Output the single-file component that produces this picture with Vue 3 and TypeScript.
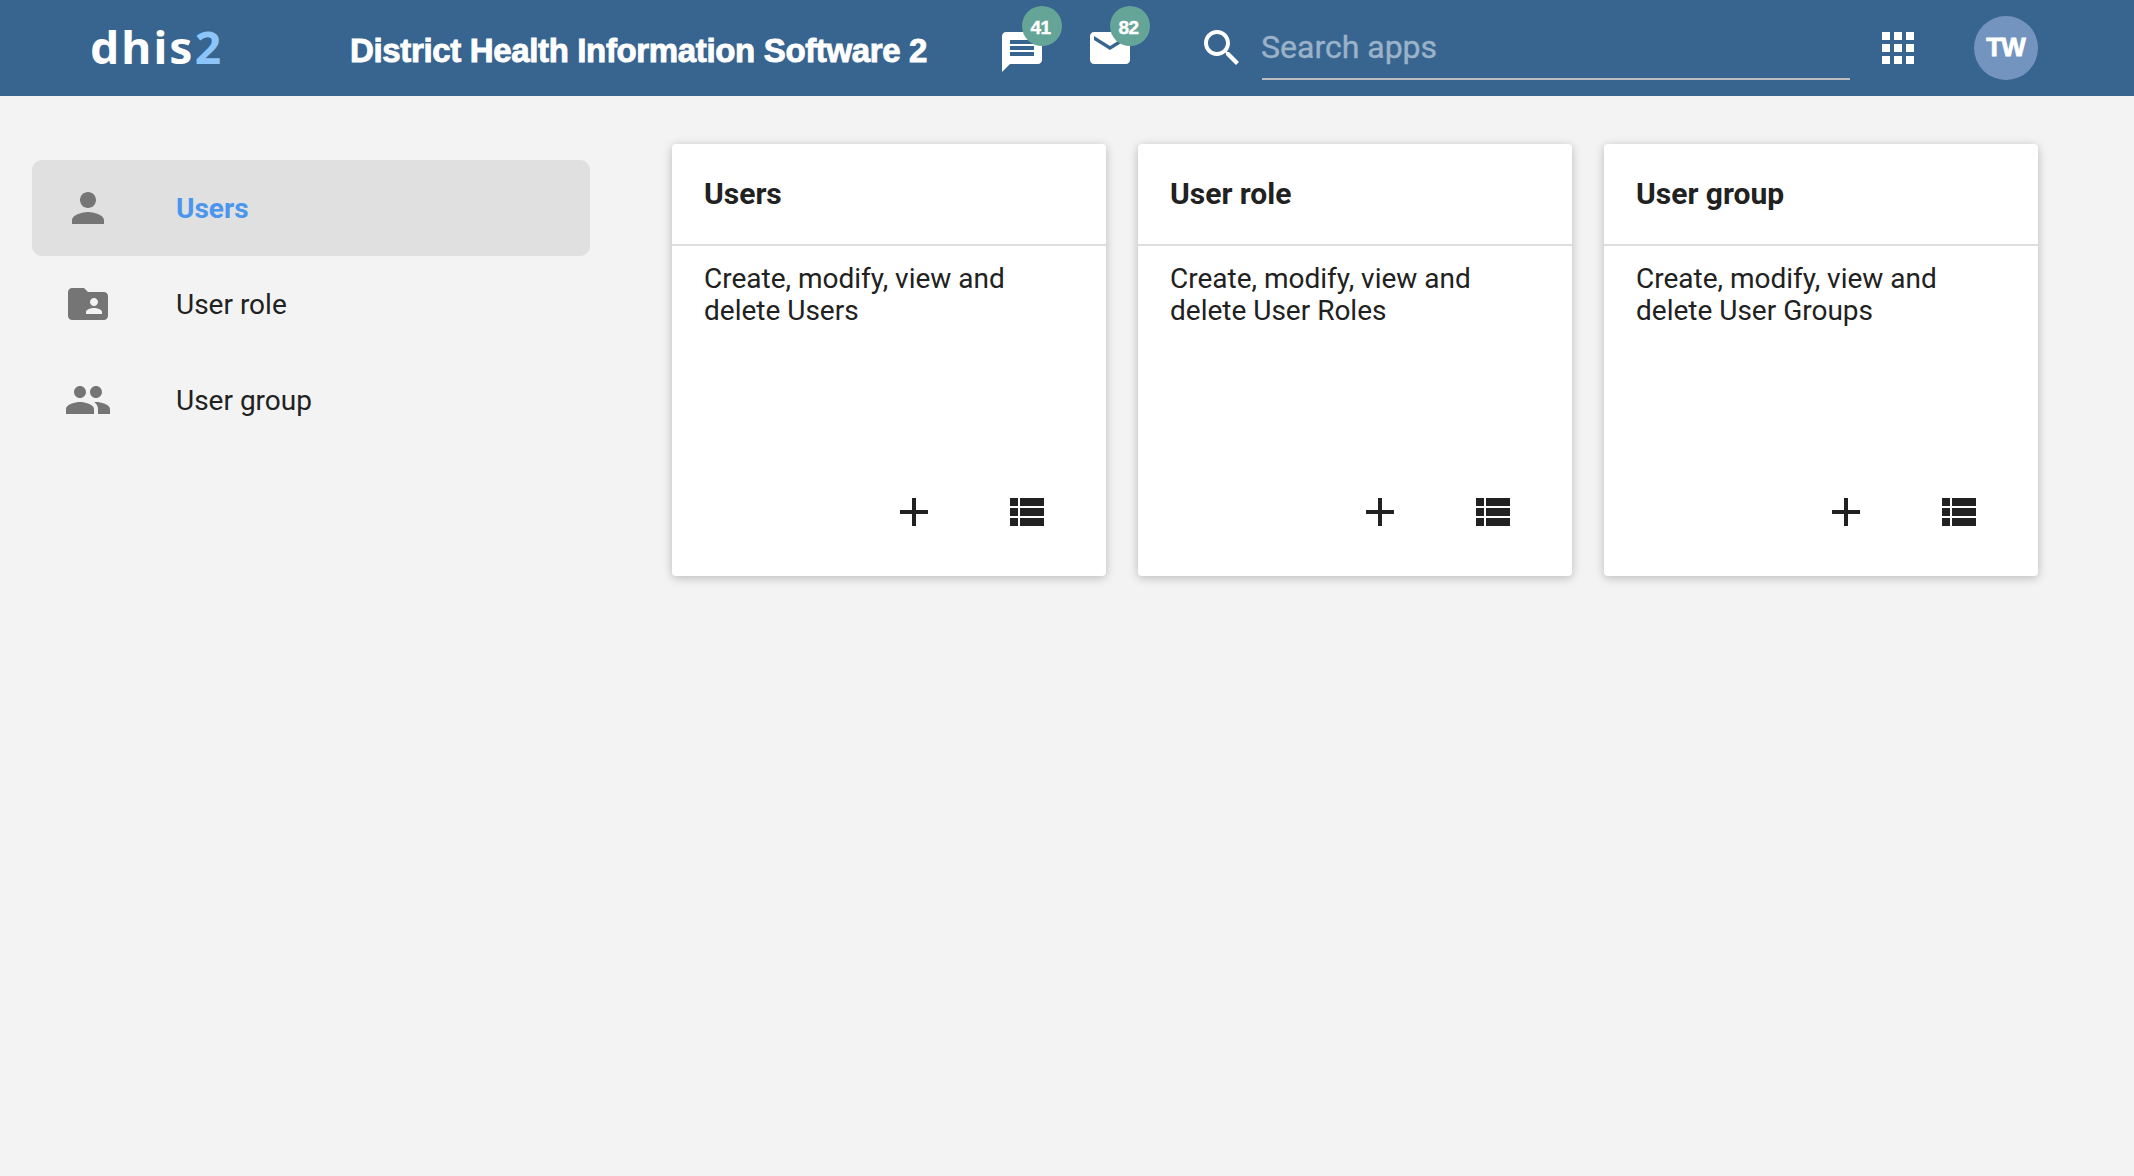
<script setup lang="ts">
interface MenuItem {
  label: string
  icon: string
  active?: boolean
}

interface SectionCard {
  title: string
  text: string
}

const icons = {
  chat: 'M20 2H4c-1.1 0-1.99.9-1.99 2L2 22l4-4h14c1.1 0 2-.9 2-2V4c0-1.1-.9-2-2-2zM6 9h12v2H6V9zm12 5H6v-2h12v2zm0-6H6V6h12v2z',
  mail: 'M20 4H4c-1.1 0-1.99.9-1.99 2L2 18c0 1.1.9 2 2 2h16c1.1 0 2-.9 2-2V6c0-1.1-.9-2-2-2zm0 4l-8 5-8-5V6l8 5 8-5v2z',
  search: 'M15.5 14h-.79l-.28-.27C15.41 12.59 16 11.11 16 9.5 16 5.91 13.09 3 9.5 3S3 5.91 3 9.5 5.91 16 9.5 16c1.61 0 3.09-.59 4.23-1.57l.27.28v.79l5 4.99L20.49 19l-4.99-5zm-6 0C7.01 14 5 11.99 5 9.5S7.01 5 9.5 5 14 7.01 14 9.5 11.99 14 9.5 14z',
  apps: 'M4 8h4V4H4v4zm6 12h4v-4h-4v4zm-6 0h4v-4H4v4zm0-6h4v-4H4v4zm6 0h4v-4h-4v4zm6-10v4h4V4h-4zm-6 4h4V4h-4v4zm6 6h4v-4h-4v4zm0 6h4v-4h-4v4z',
  person: 'M12 12c2.21 0 4-1.79 4-4s-1.79-4-4-4-4 1.79-4 4 1.79 4 4 4zm0 2c-2.67 0-8 1.34-8 4v2h16v-2c0-2.66-5.33-4-8-4z',
  folder: 'M20 6h-8l-2-2H4c-1.1 0-1.99.9-1.99 2L2 18c0 1.1.9 2 2 2h16c1.1 0 2-.9 2-2V8c0-1.1-.9-2-2-2zm-5 3c1.1 0 2 .9 2 2s-.9 2-2 2-2-.9-2-2 .9-2 2-2zm4 8h-8v-1c0-1.33 2.67-2 4-2s4 .67 4 2v1z',
  group: 'M16 11c1.66 0 2.99-1.34 2.99-3S17.66 5 16 5c-1.66 0-3 1.34-3 3s1.34 3 3 3zm-8 0c1.66 0 2.99-1.34 2.99-3S9.66 5 8 5C6.34 5 5 6.34 5 8s1.34 3 3 3zm0 2c-2.33 0-7 1.17-7 3.5V19h14v-2.5c0-2.33-4.67-3.5-7-3.5zm8 0c-.29 0-.62.02-.97.05 1.16.84 1.97 1.97 1.97 3.45V19h6v-2.5c0-2.33-4.67-3.5-7-3.5z',
  add: 'M19 13h-6v6h-2v-6H5v-2h6V5h2v6h6v2z',
  list: 'M4 14h4v-4H4v4zm0 5h4v-4H4v4zM4 9h4V5H4v4zm5 5h12v-4H9v4zm0 5h12v-4H9v4zM9 5v4h12V5H9z',
}

const menu: MenuItem[] = [
  { label: 'Users', icon: icons.person, active: true },
  { label: 'User role', icon: icons.folder },
  { label: 'User group', icon: icons.group },
]

const cards: SectionCard[] = [
  { title: 'Users', text: 'Create, modify, view and delete Users' },
  { title: 'User role', text: 'Create, modify, view and delete User Roles' },
  { title: 'User group', text: 'Create, modify, view and delete User Groups' },
]
</script>

<template>
  <div class="page">
    <header class="header">
      <div class="logo">dhis<span class="logo-two">2</span></div>
      <div class="title">District Health Information Software 2</div>
      <div class="notice chat">
        <svg class="icon" viewBox="0 0 24 24"><path :d="icons.chat" /></svg>
        <span class="badge">41</span>
      </div>
      <div class="notice mail">
        <svg class="icon" viewBox="0 0 24 24"><path :d="icons.mail" /></svg>
        <span class="badge">82</span>
      </div>
      <svg class="icon search-icon" viewBox="0 0 24 24"><path :d="icons.search" /></svg>
      <input class="search" type="text" placeholder="Search apps" />
      <svg class="icon apps" viewBox="0 0 24 24"><path :d="icons.apps" /></svg>
      <div class="avatar">TW</div>
    </header>

    <div class="body">
      <nav class="sidebar">
        <div v-for="item in menu" :key="item.label" class="item" :class="{ active: item.active }">
          <svg class="icon" viewBox="0 0 24 24"><path :d="item.icon" /></svg>
          <span>{{ item.label }}</span>
        </div>
      </nav>
      <main class="cards">
        <section v-for="card in cards" :key="card.title" class="card">
          <h2 class="card-title">{{ card.title }}</h2>
          <p class="card-text">{{ card.text }}</p>
          <div class="actions">
            <svg class="icon" viewBox="0 0 24 24"><path :d="icons.add" /></svg>
            <svg class="icon" viewBox="0 0 24 24"><path :d="icons.list" /></svg>
          </div>
        </section>
      </main>
    </div>
  </div>
</template>

<style>
body {
  margin: 0;
  background: #f3f3f3;
}
</style>

<style scoped>
.page {
  box-sizing: border-box;
  min-height: 1176px;
  background: #f3f3f3;
  font-family: Roboto, sans-serif;
  color: #212121;
}
.icon {
  display: block;
  flex: none;
  width: 48px;
  height: 48px;
  fill: currentColor;
}
.header {
  display: flex;
  align-items: center;
  box-sizing: border-box;
  height: 96px;
  padding-left: 90px;
  background: #376590;
  color: #fff;
}
.logo {
  width: 260px;
  margin-top: -2px;
  font: 700 44px/60px "Noto Sans", "Open Sans", sans-serif;
  letter-spacing: 2px;
  white-space: nowrap;
  transform: scaleX(1.05);
  transform-origin: left;
}
.logo-two {
  color: #8bc5f9;
}
.title {
  width: 648px;
  padding-top: 5px;
  font: bold 33px/40px "Liberation Sans", Arial, sans-serif;
  letter-spacing: -0.35px;
  white-space: nowrap;
  -webkit-text-stroke: 0.9px #fff;
}
.notice {
  position: relative;
  width: 48px;
}
.chat {
  margin-top: 8px;
}
.mail {
  margin-left: 40px;
}
.badge {
  position: absolute;
  top: -18px;
  left: 24px;
  box-sizing: border-box;
  width: 40px;
  height: 40px;
  padding-right: 3px;
  border-radius: 50%;
  background: #65a598;
  font: bold 19px/43px "Liberation Sans", Arial, sans-serif;
  letter-spacing: -0.6px;
  text-align: center;
  -webkit-text-stroke: 0.4px #fff;
}
.chat .badge {
  top: -22px;
}
.search-icon {
  margin-left: 64px;
}
.search {
  box-sizing: border-box;
  width: 588px;
  height: 64px;
  margin-left: 16px;
  padding: 0;
  border: 0;
  border-bottom: 2px solid #bdbdbd;
  outline: 0;
  background: transparent;
  color: #fff;
  font: 32px Roboto, sans-serif;
  text-indent: -1px;
}
.search::placeholder {
  color: #9bb2c8;
  opacity: 1;
  -webkit-text-stroke: 0.4px #9bb2c8;
}
.apps {
  margin-left: 24px;
}
.avatar {
  box-sizing: border-box;
  width: 64px;
  height: 64px;
  margin-left: 52px;
  padding-right: 1px;
  border-radius: 50%;
  background: #7494c0;
  font: bold 26px/62px "Liberation Sans", Arial, sans-serif;
  letter-spacing: -1px;
  text-align: center;
  -webkit-text-stroke: 0.8px #fff;
}
.body {
  display: flex;
  gap: 82px;
  padding: 48px 0 0 32px;
}
.sidebar {
  width: 558px;
  padding-top: 16px;
}
.item {
  display: flex;
  align-items: center;
  gap: 64px;
  height: 96px;
  padding-left: 32px;
  border-radius: 10px;
  font-size: 28px;
}
.item .icon {
  color: #757575;
}
.active {
  background: #e0e0e0;
  color: #4a96ee;
  font-weight: 700;
}
.cards {
  display: flex;
  gap: 32px;
}
.card {
  display: flex;
  flex-direction: column;
  box-sizing: border-box;
  width: 434px;
  height: 432px;
  border-radius: 4px;
  background: #fff;
  box-shadow: 0 2px 12px rgba(0, 0, 0, 0.12), 0 2px 8px rgba(0, 0, 0, 0.12);
}
.card-title {
  box-sizing: border-box;
  height: 102px;
  margin: 0;
  padding-left: 32px;
  border-bottom: 2px solid #dedede;
  font-size: 30px;
  font-weight: 700;
  line-height: 100px;
}
.card-text {
  margin: 0;
  padding: 17px 72px 0 32px;
  font-size: 28px;
  line-height: 32px;
}
.actions {
  display: flex;
  justify-content: flex-end;
  gap: 64px;
  margin-top: auto;
  padding: 0 56px 40px 0;
}
</style>
